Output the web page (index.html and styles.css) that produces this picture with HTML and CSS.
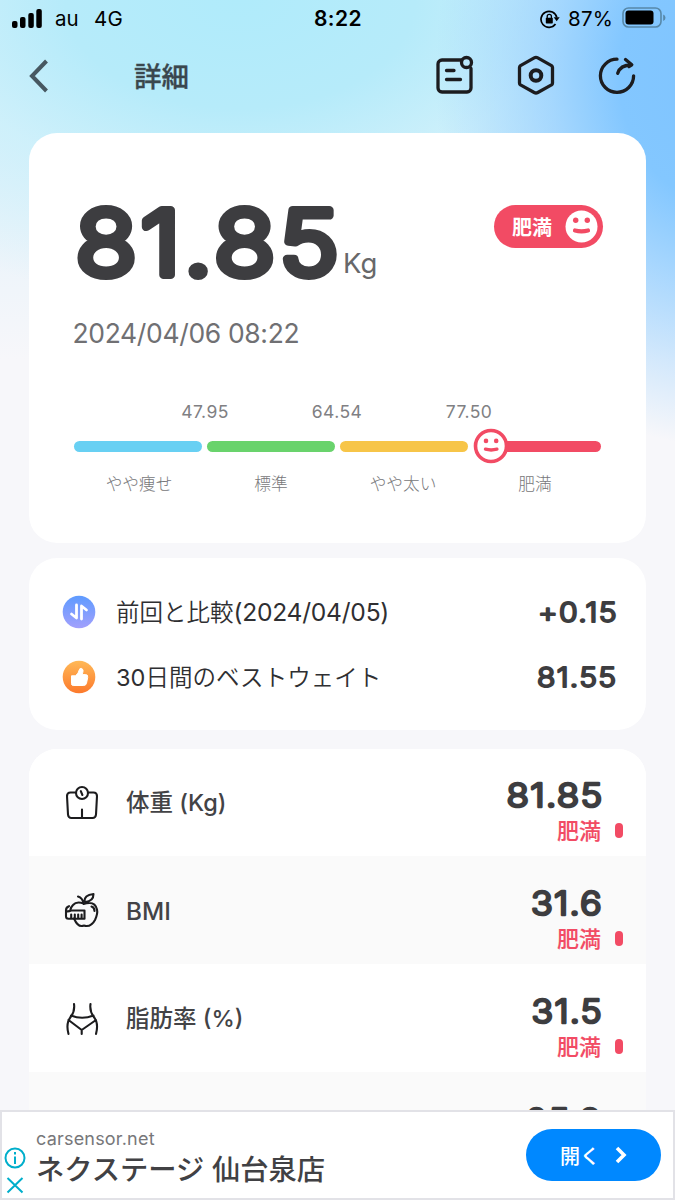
FILE: index.html
```html
<!DOCTYPE html>
<html lang="ja">
<head>
<meta charset="utf-8">
<title>詳細</title>
<link rel="stylesheet" href="styles.css">
</head>
<body>
<div class="screen">
  <header class="status">
    <svg class="signal" width="31" height="20" viewBox="0 0 31 20"><rect x="0" y="13" width="5.500" height="7" rx="2"/><rect x="8" y="9" width="5.500" height="11" rx="2"/><rect x="16.300" y="5" width="5.500" height="15" rx="2"/><rect x="24.300" y="1" width="5.500" height="19" rx="2"/></svg>
    <span class="carrier">au</span>
    <span class="network">4G</span>
    <span class="clock">8:22</span>
    <svg class="lock" width="20" height="20" viewBox="0 0 20 20"><path d="M15.500 15a8 8 0 1 1 1.300-6.500" fill="none" stroke="#000" stroke-width="1.700"/><path d="M13.700 8.200h6l-3 4z"/><rect x="5.800" y="8.800" width="7" height="5.600" rx=".7"/><path d="M7.200 9V7.400a2.100 2.100 0 0 1 4.200 0V9" fill="none" stroke="#000" stroke-width="1.300"/></svg>
    <span class="percent">87%</span>
    <svg class="battery" width="44" height="22" viewBox="0 0 44 22"><rect x="1" y="1" width="38" height="19" rx="5.500" fill="none" stroke="#5788a9" stroke-width="1.600"/><rect x="3.500" y="3.500" width="28" height="14" rx="3"/><path d="M41.200 7.500q2.300 1 2.300 3.300t-2.300 3.300z" fill="#5788a9"/></svg>
  </header>

  <nav class="nav">
    <svg class="back" width="22" height="36" viewBox="0 0 22 36"><path d="M18.500 3 4 18l14.500 15" fill="none" stroke="#475861" stroke-width="4"/></svg>
    <h1 class="title">詳細</h1>
    <div class="actions">
      <svg width="40" height="42" viewBox="0 0 40 42"><path d="M26.500 5H7a4 4 0 0 0-4 4v24a4 4 0 0 0 4 4h25a4 4 0 0 0 4-4V13.500M11.500 15.500h7.500M11.500 24.500h14"/><circle cx="31.500" cy="7.500" r="5"/></svg>
      <svg width="40" height="42" viewBox="0 0 40 42"><path d="M18.200 2.900 4.500 10.600Q3.500 11.300 3.500 12.600v15.300q0 1.300 1 2l13.700 7.600q1.800 1 3.600 0l13.700-7.600q1-.7 1-2V12.600q0-1.300-1-2L21.800 2.900q-1.800-1-3.600 0z"/><circle cx="20" cy="20.500" r="5.300" class="hub"/></svg>
      <svg width="40" height="42" viewBox="0 0 40 42"><path d="M20 4.200A16.600 16.600 0 1 0 36.600 20.800M20.700 18.300q2.500-8.300 13.800-8.300M28.500 4.600 34.800 9.800 32 11.600"/></svg>
    </div>
  </nav>

  <main class="content">
    <section class="card summary">
      <div class="headline">
        <svg class="num big" width="270" height="80" viewBox="72 202 270 80"><text x="74.500" y="275" textLength="267" lengthAdjust="spacingAndGlyphs" font-size="90" stroke-width="8">81.85</text></svg>
        <span class="unit">Kg</span>
        <div class="badge"><span>肥満</span><svg width="33" height="33" viewBox="0 0 33 33"><circle cx="16.500" cy="16.500" r="16" fill="#fff"/><circle cx="10.700" cy="10.200" r="2.700"/><circle cx="22.300" cy="10.200" r="2.700"/><path d="M10 20.500q6.500 1.600 13 0" fill="none" stroke="#f24b64" stroke-width="4.200" stroke-linecap="round"/></svg></div>
      </div>
      <time class="date">2024/04/06 08:22</time>
      <div class="limits"><span>47.95</span><span>64.54</span><span>77.50</span></div>
      <div class="scale">
        <i class="thin"></i><i class="normal"></i><i class="over"></i><i class="obese"></i>
        <svg class="pointer" width="36" height="36" viewBox="0 0 36 36"><circle cx="18" cy="18" r="15.500" fill="#fff" stroke="#f24b64" stroke-width="3.600"/><circle cx="13" cy="12.900" r="2.300"/><circle cx="23.200" cy="12.900" r="2.300"/><path d="M12.500 21.200q5.600 1.500 11.400 0" fill="none" stroke="#f24b64" stroke-width="3.400" stroke-linecap="round"/></svg>
      </div>
      <div class="zones"><span>やや痩せ</span><span>標準</span><span>やや太い</span><span>肥満</span></div>
    </section>

    <section class="card compare">
      <div class="line">
        <svg width="34" height="34" viewBox="0 0 34 34"><defs><linearGradient id="blue" x2="0" y2="1"><stop stop-color="#5e9bff"/><stop offset="1" stop-color="#a2a0fc"/></linearGradient></defs><circle cx="17" cy="17" r="16.300" fill="url(#blue)"/><path d="M14.500 10v13L9.500 19M19.500 24V11l5 4" fill="none" stroke="#fff" stroke-width="2.800" stroke-linecap="round" stroke-linejoin="round"/></svg>
        <span class="label prev">前回と比較<span class="day">(2024/04/05)</span></span>
        <svg class="num" width="84" height="30" viewBox="534 597 84 30"><text x="538" y="621.500" textLength="80" lengthAdjust="spacingAndGlyphs" font-size="26.500" stroke-width="2">+0.15</text></svg>
      </div>
      <div class="line">
        <svg width="34" height="34" viewBox="0 0 34 34"><defs><linearGradient id="orange" x2="0" y2="1"><stop stop-color="#ffb957"/><stop offset="1" stop-color="#fc792c"/></linearGradient></defs><circle cx="17" cy="17" r="16.300" fill="url(#orange)"/><path d="M9.500 15.800h4q3.200-2.500 3.800-6 .6-2 2.400-1.300 2 .8 1.200 3.600l-.8 2.500h3.500q2.600 0 2.100 2.800l-1.200 5.800q-.5 2.300-2.800 2.300H11.200q-1.700 0-1.700-1.800z" fill="#fff" stroke="#fff" stroke-linejoin="round"/></svg>
        <span class="label best"><span class="days">30</span>日間のベストウェイト</span>
        <svg class="num" width="84" height="30" viewBox="534 662 84 30"><text x="537" y="686.500" textLength="80.500" lengthAdjust="spacingAndGlyphs" font-size="26.500" stroke-width="2">81.55</text></svg>
      </div>
    </section>

    <section class="card metrics">
      <div class="row">
        <svg class="icon" width="38" height="38" viewBox="0 0 38 38"><path d="M13 8.500H7.500q-3.500 0-3.500 3.500l1 18.500q.3 3.500 3.500 3.500h21q3.200 0 3.500-3.500L34 12q0-3.500-3.500-3.500H25M19 25.500V34"/><circle cx="19" cy="9" r="6"/><path d="m17.800 7.200 1.600 3.800"/></svg>
        <span class="name weight">体重 (Kg)</span>
        <div class="result">
          <svg class="num" width="100" height="32" viewBox="503 779 100 32"><text x="506.500" y="807" textLength="97" lengthAdjust="spacingAndGlyphs" font-size="33" stroke-width="2.600">81.85</text></svg>
          <span class="verdict">肥満</span>
        </div><i class="mark"></i>
      </div>
      <div class="row alt">
        <svg class="icon" width="38" height="38" viewBox="-1 0 38 38"><path d="M19.500 11.500q-7-2.500-10.500 1.500-2 2-2.500 4.500M10 26.500q3.500 8 8 7.500 2-.8 4 0 5.500.5 9-6 3-6.500 2-10.500-1.500-6.500-7.500-6.500-3 0-6 1M19.500 11q-1-5-5.500-6.500M20.500 9.500q-.5-6.500 9-7.500 0 7-8 8M27.500 14.500q3 1 3 4.500"/><path d="M7 18.500h13.500v8.200H4.500q-2.500 0-2.500-2.500v-6q0-3 3-4M2 19q2 1 5-.5M7.200 26v-3.500M10.800 26v-3.500M14.200 26v-3.500M17.600 26v-3.500"/></svg>
        <span class="name bmi">BMI</span>
        <div class="result">
          <svg class="num" width="100" height="32" viewBox="503 887 100 32"><text x="531" y="914.800" textLength="72" lengthAdjust="spacingAndGlyphs" font-size="33" stroke-width="2.600">31.6</text></svg>
          <span class="verdict">肥満</span>
        </div><i class="mark"></i>
      </div>
      <div class="row">
        <svg class="icon" width="38" height="38" viewBox="0 0 38 38"><path d="M11 4q1 7-3 12.500Q2.500 23 5.500 34M27.500 4q-1 7 3 12.500Q36 23 33 34M8 15.500q11 4.500 22.500 0M5.500 20 18.700 30M33 20 18.700 30v4"/></svg>
        <span class="name fat">脂肪率 (%)</span>
        <div class="result">
          <svg class="num" width="100" height="32" viewBox="503 995 100 32"><text x="531.500" y="1022.800" textLength="71.500" lengthAdjust="spacingAndGlyphs" font-size="33" stroke-width="2.600">31.5</text></svg>
          <span class="verdict">肥満</span>
        </div><i class="mark"></i>
      </div>
      <div class="row alt">
        <div class="result last">
          <svg class="num" width="100" height="32" viewBox="503 1103 100 32"><text x="526" y="1131.500" textLength="76" lengthAdjust="spacingAndGlyphs" font-size="33" stroke-width="2.600">25.8</text></svg>
        </div>
      </div>
    </section>
  </main>

  <aside class="ad">
    <svg class="choices" width="24" height="52" viewBox="0 0 24 52"><circle cx="12" cy="12" r="9.500"/><path d="M12 10.500V18M12 6v2.400M4.500 32l15 14.500M19.500 32l-15 14.500"/></svg>
    <div class="copy"><span class="site">carsensor.net</span><span class="shop">ネクステージ 仙台泉店</span></div>
    <a class="open">開く<svg width="14" height="20" viewBox="0 0 14 20"><path d="m3 3 7 7-7 7" fill="none" stroke="#fff" stroke-width="3.600"/></svg></a>
  </aside>
</div>
</body>
</html>
```
FILE: styles.css
```css
* { box-sizing: border-box; }
body { margin: 0; font-family: Inter, "Noto Sans CJK JP", sans-serif; color: #3d3d40; }
svg { display: block; flex: none; }
span, time, h1 { white-space: nowrap; }
.screen {
  width: 675px; height: 1200px; overflow: hidden; position: relative;
  background:
    radial-gradient(ellipse 275px 370px at 710px 75px, #7fc4ff 0%, #83c7ff 33%, rgba(150,207,255,.75) 58%, rgba(190,223,252,0) 100%),
    radial-gradient(ellipse 500px 310px at 240px 0, #b0ebfb 0%, #b6ebfa 35%, rgba(200,240,251,.75) 62%, rgba(247,247,250,0) 100%),
    linear-gradient(#dceefa 0, #e2f1fa 150px, #f7f7fa 360px);
}
.status { height: 37px; display: flex; align-items: center; padding-left: 12px; color: #000; font-size: 20.5px; line-height: 37px; }
.signal { margin-bottom: 2px; }
.carrier { margin-left: 12px; width: 39px; font-size: 20.5px; }
.network { width: 220px; font-size: 20.5px; letter-spacing: .2px; }
.clock { width: 226px; font-weight: 600; font-size: 21px; letter-spacing: .4px; }
.percent { margin-left: 8px; width: 54px; letter-spacing: .2px; }
.battery { margin-top: -1px; }
.nav { height: 96px; display: flex; align-items: flex-start; padding: 21px 38px 0 28px; }
.title { margin: 2px 0 0 84px; font-size: 27.5px; line-height: 34px; font-weight: 500; color: #3a474e; -webkit-text-stroke: .3px #3a474e; }
.actions { display: flex; margin-left: auto; gap: 41px; margin-top: -3px; }
.actions svg { fill: none; stroke: #1c1c1f; stroke-width: 3.3; stroke-linecap: round; stroke-linejoin: round; }
.actions .hub { stroke-width: 4; }
.content { padding: 0 29px; }
.card { background: #fff; border-radius: 28px; overflow: hidden; }
.num { overflow: visible; }
.num text { font-family: Inter, sans-serif; font-weight: 300; letter-spacing: 1.2px; fill: #3d3d40; stroke: #3d3d40; stroke-linejoin: round; }
.big text { letter-spacing: 3.5px; }
.summary { height: 410px; padding: 69px 43px 0 44px; }
.headline { height: 112px; display: flex; align-items: flex-start; }
.unit { margin: 43px 0 0 0; font-size: 27.5px; line-height: 36px; color: #68686a; }
.badge { margin: 3px 0 0 auto; width: 109px; height: 43px; border-radius: 22px; background: #f24b64; display: flex; align-items: center; padding: 0 5px 0 18px; color: #fff; font-weight: 700; font-size: 20px; justify-content: space-between; }
.badge svg, .pointer { fill: #f24b64; }
.date { display: block; font-size: 26.5px; line-height: 38px; letter-spacing: -.35px; margin-left: -.5px; color: #707073; }
.limits { display: grid; grid-template-columns: repeat(3, 132px); margin: 48px 0 0 66px; font-size: 17.5px; line-height: 24px; letter-spacing: .4px; text-align: center; color: #808083; }
.scale { display: flex; gap: 5px; margin-top: 17px; padding-left: 1px; position: relative; }
.scale i { width: 128px; height: 11px; border-radius: 6px; }
.thin { background: #68d0f3; }
.normal { background: #69d36c; }
.over { background: #f7c548; }
.scale .obese { background: #f24b64; width: 118px; margin-left: 10px; }
.pointer { position: absolute; left: 400px; top: -13px; }
.zones { display: grid; grid-template-columns: repeat(4, 132px); margin-top: 20px; font-size: 16.7px; line-height: 24px; text-align: center; color: #77777a; font-weight: 300; }
.compare { height: 172px; margin-top: 15px; padding: 21px 28px 0 33px; }
.line { height: 65px; display: flex; align-items: center; }
.line .num { margin-left: auto; }
.label { margin: -2px 0 0 20px; color: #2f2f32; font-size: 23.5px; font-weight: 350; }
.day { font-size: 24.6px; font-weight: 400; letter-spacing: -.25px; }
.days { font-weight: 400; }
.best { letter-spacing: .05px; }
.metrics { height: 480px; margin-top: 19px; }
.row { height: 108px; display: flex; align-items: flex-start; padding: 31px 23px 0 34px; background: #fff; }
.row:first-child { height: 107px; padding-top: 30px; }
.alt { background: #fafafa; }
.icon { margin-top: 5px; fill: none; stroke: #1c1c1e; stroke-width: 2.1; stroke-linecap: round; stroke-linejoin: round; }
.name { margin: 6px 0 0 25px; font-size: 23.5px; line-height: 36px; font-weight: 500; color: #434346; }
.bmi { font-size: 24.3px; }
.weight, .fat { margin-top: 6px; }
.result { margin-left: auto; width: 100px; display: flex; flex-direction: column; }
.verdict { margin-top: 5px; text-align: right; font-size: 22px; line-height: 30px; font-weight: 500; color: #f24b64; padding-right: 2px; -webkit-text-stroke: .15px #f24b64; }
.mark { width: 8px; height: 15px; border-radius: 4px; background: #f24b64; margin: 44px 0 0 12px; }
.last { margin-right: 20px; }
.ad { position: absolute; left: 0; top: 1110px; width: 675px; height: 90px; background: #fff; border: 2px solid #e2e2e7; display: flex; padding-left: 1px; }
.choices { fill: none; stroke: #00aecb; stroke-width: 2; margin-top: 34px; }
.copy { display: flex; flex-direction: column; margin-left: 9px; }
.site { margin-top: 14px; font-size: 18px; line-height: 25px; letter-spacing: .2px; color: #77777a; }
.shop { margin-top: 2px; font-size: 28.3px; line-height: 34px; font-weight: 500; color: #414144; }
.open { margin: 17px 12px 0 auto; width: 135px; height: 52px; border-radius: 26px; background: #0088ff; color: #fff; font-size: 20px; font-weight: 500; display: flex; align-items: center; padding-left: 34px; gap: 14px; }
```
